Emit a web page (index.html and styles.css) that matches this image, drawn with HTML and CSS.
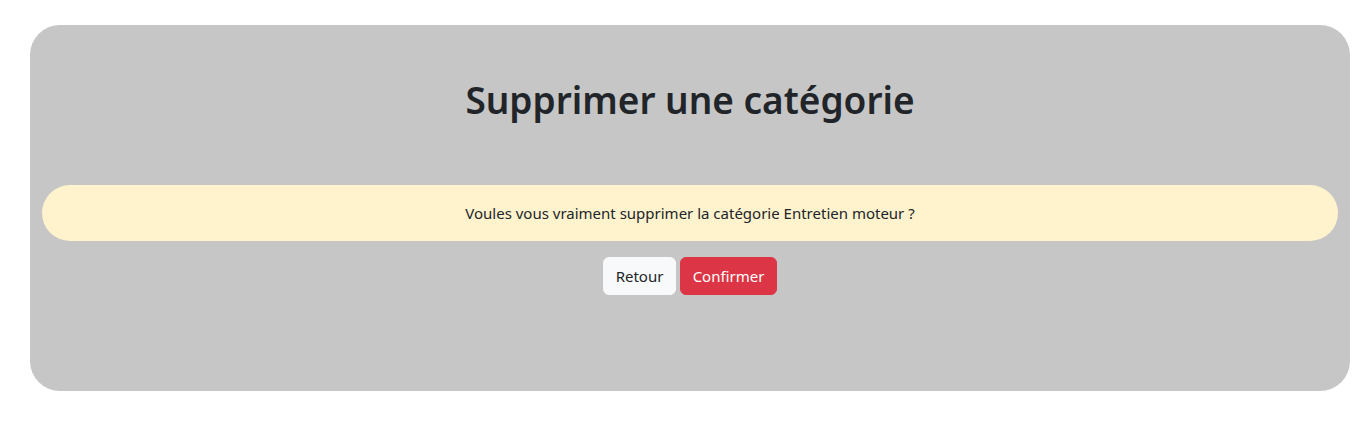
FILE: index.html
```html
<!DOCTYPE html>
<html lang="fr">
<head>
<meta charset="utf-8">
<title>Supprimer une catégorie</title>
<link rel="stylesheet" href="styles.css">
</head>
<body>
<main class="card">
  <h1 class="title">Supprimer une catégorie</h1>
  <div class="alert">Voules vous vraiment supprimer la catégorie Entretien moteur ?</div>
  <div class="actions">
    <button class="btn btn-light" type="button">Retour</button>
    <button class="btn btn-danger" type="button">Confirmer</button>
  </div>
</main>
</body>
</html>
```
FILE: styles.css
```css
* { box-sizing: border-box; }
html, body { margin: 0; padding: 0; background: #fff; }
body {
  font-family: "Noto Sans", "Open Sans", "DejaVu Sans", sans-serif;
  font-size: 16px;
  line-height: 1.5;
  color: #212529;
  padding: 25px 14px 0 30px;
}
.card {
  width: 1320px;
  height: 366px;
  background: #c6c6c6;
  border-radius: 30px;
  padding: 51px 12px 0 12px;
}
.title {
  margin: 0;
  text-align: center;
  font-size: 37px;
  font-weight: 600;
  line-height: 48px;
}
.alert {
  margin: 61px 0 16px 0;
  height: 56px;
  padding: 16px;
  background: #fff3cd;
  border-radius: 28px;
  text-align: center;
  font-size: 15px;
  line-height: 24px;
  color: #212529;
}
.actions {
  display: flex;
  justify-content: center;
  gap: 4px;
}
.btn {
  font-family: inherit;
  font-size: 15px;
  line-height: 24px;
  height: 38px;
  padding: 6px 0;
  border: 1px solid transparent;
  border-radius: 6px;
  cursor: pointer;
  text-align: center;
}
.btn-light { background: #f8f9fa; color: #212529; border-color: #f8f9fa; width: 73px; }
.btn-danger { background: #dc3545; color: #fff; border-color: #dc3545; width: 97px; }
```
